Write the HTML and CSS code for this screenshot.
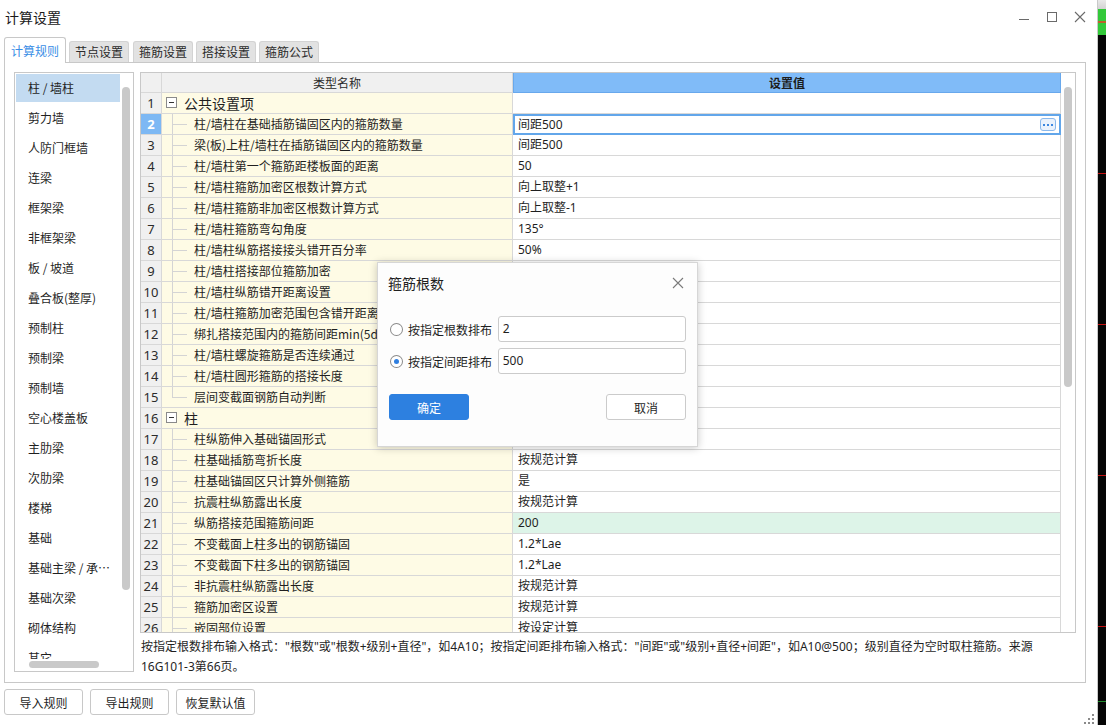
FILE: index.html
```html
<!DOCTYPE html>
<html lang="zh-CN">
<head>
<meta charset="utf-8">
<title>计算设置</title>
<link rel="stylesheet" href="styles.css">
</head>
<body>
<div class="screen">
  <div class="window">
    <div class="titlebar">
      <span class="title">计算设置</span>
      <div class="controls">
        <span class="ctl"><svg width="12" height="12" viewBox="0 0 12 12"><line x1="1" y1="8.5" x2="11" y2="8.5" stroke="#6a6a6a" stroke-width="1"/></svg></span>
        <span class="ctl"><svg width="12" height="12" viewBox="0 0 12 12"><rect x="1.5" y="1.5" width="9" height="9" fill="none" stroke="#6a6a6a" stroke-width="1"/></svg></span>
        <span class="ctl"><svg width="12" height="12" viewBox="0 0 12 12"><path d="M1 1 L11 11 M11 1 L1 11" stroke="#6a6a6a" stroke-width="1.1"/></svg></span>
      </div>
    </div>
    <div class="tabs">
      <span class="tab active">计算规则</span>
      <span class="tab">节点设置</span>
      <span class="tab t2">箍筋设置</span>
      <span class="tab">搭接设置</span>
      <span class="tab">箍筋公式</span>
    </div>
    <div class="panel">
      <div class="list">
        <div class="list-main">
          <ul class="items">
            <li class="sel">柱 / 墙柱</li>
            <li>剪力墙</li>
            <li>人防门框墙</li>
            <li>连梁</li>
            <li>框架梁</li>
            <li>非框架梁</li>
            <li>板 / 坡道</li>
            <li>叠合板(整厚)</li>
            <li>预制柱</li>
            <li>预制梁</li>
            <li>预制墙</li>
            <li>空心楼盖板</li>
            <li>主肋梁</li>
            <li>次肋梁</li>
            <li>楼梯</li>
            <li>基础</li>
            <li>基础主梁 / 承台梁</li>
            <li>基础次梁</li>
            <li>砌体结构</li>
            <li>其它</li>
          </ul>
          <div class="vtrack"><div class="vthumb"></div></div>
        </div>
        <div class="htrack"><div class="hthumb"></div></div>
      </div>
      <div class="main">
        <div class="table">
          <div class="grid">
            <div class="row head"><span class="num"></span><span class="hname">类型名称</span><span class="hval">设置值</span></div>
            <div class="row"><span class="num">1</span><span class="name group"><i class="fold"></i>公共设置项</span><span class="val"></span></div>
            <div class="row"><span class="num cur">2</span><span class="name child">柱/墙柱在基础插筋锚固区内的箍筋数量</span><span class="val editing">间距500<span class="more"><b></b><b></b><b></b></span></span></div>
            <div class="row"><span class="num">3</span><span class="name child">梁(板)上柱/墙柱在插筋锚固区内的箍筋数量</span><span class="val">间距500</span></div>
            <div class="row"><span class="num">4</span><span class="name child">柱/墙柱第一个箍筋距楼板面的距离</span><span class="val">50</span></div>
            <div class="row"><span class="num">5</span><span class="name child">柱/墙柱箍筋加密区根数计算方式</span><span class="val">向上取整+1</span></div>
            <div class="row"><span class="num">6</span><span class="name child">柱/墙柱箍筋非加密区根数计算方式</span><span class="val">向上取整-1</span></div>
            <div class="row"><span class="num">7</span><span class="name child">柱/墙柱箍筋弯勾角度</span><span class="val">135°</span></div>
            <div class="row"><span class="num">8</span><span class="name child">柱/墙柱纵筋搭接接头错开百分率</span><span class="val">50%</span></div>
            <div class="row"><span class="num">9</span><span class="name child">柱/墙柱搭接部位箍筋加密</span><span class="val"></span></div>
            <div class="row"><span class="num">10</span><span class="name child">柱/墙柱纵筋错开距离设置</span><span class="val"></span></div>
            <div class="row"><span class="num">11</span><span class="name child">柱/墙柱箍筋加密范围包含错开距离</span><span class="val"></span></div>
            <div class="row"><span class="num">12</span><span class="name child">绑扎搭接范围内的箍筋间距min(5d,100)</span><span class="val"></span></div>
            <div class="row"><span class="num">13</span><span class="name child">柱/墙柱螺旋箍筋是否连续通过</span><span class="val"></span></div>
            <div class="row"><span class="num">14</span><span class="name child">柱/墙柱圆形箍筋的搭接长度</span><span class="val"></span></div>
            <div class="row"><span class="num">15</span><span class="name child last">层间变截面钢筋自动判断</span><span class="val"></span></div>
            <div class="row"><span class="num">16</span><span class="name group"><i class="fold"></i>柱</span><span class="val"></span></div>
            <div class="row"><span class="num">17</span><span class="name child">柱纵筋伸入基础锚固形式</span><span class="val"></span></div>
            <div class="row"><span class="num">18</span><span class="name child">柱基础插筋弯折长度</span><span class="val">按规范计算</span></div>
            <div class="row"><span class="num">19</span><span class="name child">柱基础锚固区只计算外侧箍筋</span><span class="val">是</span></div>
            <div class="row"><span class="num">20</span><span class="name child">抗震柱纵筋露出长度</span><span class="val">按规范计算</span></div>
            <div class="row"><span class="num">21</span><span class="name child">纵筋搭接范围箍筋间距</span><span class="val green">200</span></div>
            <div class="row"><span class="num">22</span><span class="name child">不变截面上柱多出的钢筋锚固</span><span class="val">1.2*Lae</span></div>
            <div class="row"><span class="num">23</span><span class="name child">不变截面下柱多出的钢筋锚固</span><span class="val">1.2*Lae</span></div>
            <div class="row"><span class="num">24</span><span class="name child">非抗震柱纵筋露出长度</span><span class="val">按规范计算</span></div>
            <div class="row"><span class="num">25</span><span class="name child">箍筋加密区设置</span><span class="val">按规范计算</span></div>
            <div class="row"><span class="num">26</span><span class="name child">嵌固部位设置</span><span class="val">按设定计算</span></div>
          </div>
          <div class="tscroll"><div class="tthumb"></div></div>
        </div>
        <p class="desc">按指定根数排布输入格式："根数"或"根数+级别+直径"，如4A10；按指定间距排布输入格式："间距"或"级别+直径+间距"，如A10@500；级别直径为空时取柱箍筋。来源<br>16G101-3第66页。</p>
      </div>
    </div>
    <div class="actions">
      <button class="btn">导入规则</button>
      <button class="btn">导出规则</button>
      <button class="btn">恢复默认值</button>
    </div>

    <div class="dialog">
      <div class="dlg-title">
        <span>箍筋根数</span>
        <svg class="dlg-close" width="12" height="12" viewBox="0 0 12 12"><path d="M1 1 L11 11 M11 1 L1 11" stroke="#7a7a7a" stroke-width="1.1"/></svg>
      </div>
      <div class="dlg-body">
        <div class="opt">
          <span class="radio"></span>
          <span class="opt-label">按指定根数排布</span>
          <span class="input">2</span>
        </div>
        <div class="opt">
          <span class="radio on"></span>
          <span class="opt-label">按指定间距排布</span>
          <span class="input">500</span>
        </div>
      </div>
      <div class="dlg-actions">
        <button class="dbtn primary">确定</button>
        <button class="dbtn">取消</button>
      </div>
    </div>

    <svg class="grip" width="10" height="10" viewBox="0 0 10 10">
      <rect x="8" y="0" width="2" height="2" fill="#8a8a8a"/>
      <rect x="4" y="4" width="2" height="2" fill="#8a8a8a"/>
      <rect x="8" y="4" width="2" height="2" fill="#8a8a8a"/>
      <rect x="0" y="8" width="2" height="2" fill="#8a8a8a"/>
      <rect x="4" y="8" width="2" height="2" fill="#8a8a8a"/>
      <rect x="8" y="8" width="2" height="2" fill="#8a8a8a"/>
    </svg>
  </div>
  <div class="strip">
    <div class="s-top"></div>
    <div class="s-green"></div>
    <div class="s-black">
      <div class="s-gap g1"></div><div class="s-red"></div>
      <div class="s-gap g2"></div><div class="s-red"></div>
      <div class="s-gap g2"></div><div class="s-red"></div>
      <div class="s-gap g3"></div><div class="s-red"></div>
      <div class="s-gap g4"></div><div class="s-grn"></div>
    </div>
  </div>
</div>
</body>
</html>
```

FILE: styles.css
```css
* { box-sizing: border-box; }
html, body { margin: 0; padding: 0; }
body {
  font-family: "Noto Sans", "Noto Sans CJK SC", sans-serif;
  font-size: 12px;
  color: #1f1f1f;
  background: #fff;
}
.screen {
  width: 1106px;
  height: 725px;
  display: flex;
  overflow: hidden;
}
.window {
  width: 1098px;
  height: 725px;
  border-right: 1px solid #c9c9c9;
  background: #fff;
  position: relative;
  display: flex;
  flex-direction: column;
}

/* title bar */
.titlebar {
  height: 37px;
  display: flex;
  align-items: flex-start;
  padding: 7px 3px 0 5px;
}
.title {
  font-family: "Noto Sans CJK SC", sans-serif;
  font-size: 14px;
  line-height: 20px;
  color: #1a1a1a;
}
.controls { margin-left: auto; display: flex; }
.ctl {
  width: 28px;
  height: 20px;
  display: flex;
  align-items: center;
  justify-content: center;
}

/* tabs */
.tabs {
  height: 25px;
  display: flex;
  align-items: flex-end;
  padding-left: 4px;
  position: relative;
  z-index: 1;
}
.tab {
  height: 21px;
  padding: 0 5px;
  margin-left: 3px;
  background: #e2e2e2;
  border: 1px solid #d3d3d3;
  border-bottom: none;
  border-radius: 3px 3px 0 0;
  font-family: "Noto Sans CJK SC", sans-serif;
  font-size: 12px;
  line-height: 20px;
  color: #2a2a2a;
  width: 60px;
  text-align: center;
}
.tab.t2 { margin-left: 4px; }
.tab.active {
  margin-left: 0;
  width: 62px;
  height: 26px;
  margin-bottom: -1px;
  background: #fff;
  border-color: #c8c8c8;
  color: #3a8ee6;
  line-height: 25px;
}

/* panel */
.panel {
  margin-left: 4px;
  width: 1082px;
  height: 621px;
  border: 1px solid #c8c8c8;
  padding: 9px 9px 0 9px;
  display: flex;
  gap: 6px;
}
.list {
  width: 120px;
  height: 600px;
  border: 1px solid #c8c8c8;
  display: flex;
  flex-direction: column;
  background: #fff;
}
.list-main {
  height: 586px;
  display: flex;
  overflow: hidden;
}
.items {
  list-style: none;
  margin: 0;
  padding: 1px 0 0 1px;
  width: 105px;
}
.items li {
  height: 28px;
  margin-bottom: 2px;
  padding-left: 12px;
  padding-right: 7px;
  font-family: "Noto Sans CJK SC", sans-serif;
  font-size: 12px;
  line-height: 28px;
  color: #1f1f1f;
  white-space: nowrap;
  overflow: hidden;
  text-overflow: ellipsis;
}
.items li.sel { background: #c3dbf1; }
.vtrack { width: 13px; padding: 14px 0 0 2px; }
.vthumb {
  width: 8px;
  height: 503px;
  background: #c9c9c9;
  border-radius: 4px;
}
.htrack { height: 12px; padding: 2px 0 0 14px; }
.hthumb {
  width: 70px;
  height: 7px;
  background: #c9c9c9;
  border-radius: 4px;
}

/* main table */
.main { width: 936px; display: flex; flex-direction: column; }
.table {
  width: 936px;
  height: 561px;
  border: 1px solid #c8c8c8;
  display: flex;
  overflow: hidden;
}
.grid { width: 920px; overflow: hidden; }
.row {
  display: grid;
  grid-template-columns: 21px 351px 548px;
  height: 21px;
}
.row > span {
  border-right: 1px solid #d8d8d8;
  border-bottom: 1px solid #d8d8d8;
  height: 21px;
  line-height: 20px;
  white-space: nowrap;
  overflow: hidden;
  font-family: "Noto Sans CJK SC", sans-serif;
  font-size: 12px;
}
.num {
  background: #f0f0f0;
  text-align: center;
  font-family: "Noto Sans", sans-serif !important;
  font-size: 13px !important;
  color: #2b2b2b;
}
.num.cur { background: #7db8f4; color: #fff; font-weight: bold; }
.row.head { height: 20px; }
.row.head > span { height: 20px; line-height: 19px; }
.hname { background: #f0f0f0; text-align: center; color: #2b2b2b; }
.hval {
  background: #80bbf8;
  border: 1px solid #68a8ec !important;
  border-top: none !important;
  text-align: center;
  font-weight: bold;
  color: #1d1d1d;
}
.name {
  background: #fefbe5;
  position: relative;
  color: #1f1f1f;
}
.name.child { padding-left: 32px; }
.name.child::before {
  content: "";
  position: absolute;
  left: 10px;
  top: 0;
  width: 1px;
  height: 21px;
  background: #d4d4d4;
}
.name.child.last::before { height: 10px; }
.name.child::after {
  content: "";
  position: absolute;
  left: 10px;
  top: 10px;
  width: 15px;
  height: 1px;
  background: #d4d4d4;
}
.name.group {
  padding-left: 22px;
  font-size: 14px !important;
}
.fold {
  position: absolute;
  left: 4px;
  top: 4px;
  width: 11px;
  height: 11px;
  border: 1px solid #8a8a8a;
  background: #fff;
}
.fold::after {
  content: "";
  position: absolute;
  left: 2px;
  top: 4px;
  width: 5px;
  height: 1px;
  background: #333;
}
.val {
  background: #fff;
  padding-left: 5px;
  font-family: "Noto Sans", "Noto Sans CJK SC", sans-serif !important;
  color: #1f1f1f;
}
.val.green { background: #ddf4e8; }
.val.editing {
  border: 2px solid #62a6ea !important;
  padding-left: 3px;
  line-height: 17px !important;
  display: flex;
  align-items: center;
}
.more {
  margin-left: auto;
  margin-right: 3px;
  width: 16px;
  height: 13px;
  border: 1px solid #8bb9ec;
  border-radius: 3px;
  background: #eaf2fc;
  display: flex;
  align-items: center;
  justify-content: center;
  gap: 2px;
}
.more b {
  width: 2px;
  height: 2px;
  background: #3b87e0;
}
.tscroll { width: 14px; padding: 14px 0 0 3px; background: #fff; }
.tthumb {
  width: 8px;
  height: 300px;
  background: #c9c9c9;
  border-radius: 4px;
}
.desc {
  margin: 4px 0 0 1px;
  font-family: "Noto Sans", "Noto Sans CJK SC", sans-serif;
  font-size: 12px;
  line-height: 20px;
  color: #1f1f1f;
  white-space: nowrap;
}

/* bottom actions */
.actions {
  display: flex;
  gap: 7px;
  padding: 6px 0 0 4px;
}
.btn {
  width: 79px;
  height: 26px;
  background: #fff;
  border: 1px solid #c8c8c8;
  border-radius: 3px;
  font-family: "Noto Sans CJK SC", sans-serif;
  font-size: 12px;
  color: #1f1f1f;
  padding: 0;
}

/* dialog (overlay) */
.dialog {
  position: absolute;
  left: 377px;
  top: 262px;
  width: 321px;
  height: 185px;
  background: #fdfdfd;
  border: 1px solid #d6d6d6;
  box-shadow: 0 1px 8px rgba(0, 0, 0, 0.22);
  padding: 0 11px 0 10px;
  display: flex;
  flex-direction: column;
}
.dlg-title {
  height: 39px;
  display: flex;
  align-items: center;
  justify-content: space-between;
  font-family: "Noto Sans CJK SC", sans-serif;
  font-size: 14px;
  color: #1f1f1f;
}
.dlg-close { margin-right: 2px; }
.dlg-body {
  margin-top: 14px;
  display: flex;
  flex-direction: column;
  gap: 6px;
}
.opt { display: flex; align-items: center; height: 26px; }
.radio {
  width: 13px;
  height: 13px;
  border: 1px solid #8a8a8a;
  border-radius: 50%;
  margin-left: 2px;
  background: #fff;
  display: flex;
  align-items: center;
  justify-content: center;
}
.radio.on::after {
  content: "";
  width: 5px;
  height: 5px;
  border-radius: 50%;
  background: #2f7fe0;
}
.opt-label {
  margin-left: 5px;
  width: 90px;
  font-family: "Noto Sans CJK SC", sans-serif;
  font-size: 12px;
  color: #1f1f1f;
}
.input {
  width: 189px;
  height: 26px;
  border: 1px solid #cbcbcb;
  border-radius: 3px;
  background: #fff;
  padding-left: 4px;
  font-family: "Noto Sans", sans-serif;
  font-size: 12px;
  line-height: 24px;
  color: #1f1f1f;
}
.dlg-actions {
  margin-top: 20px;
  display: flex;
  justify-content: space-between;
  padding-left: 1px;
}
.dbtn {
  width: 80px;
  height: 26px;
  border: 1px solid #cbcbcb;
  border-radius: 3px;
  background: #fff;
  font-family: "Noto Sans CJK SC", sans-serif;
  font-size: 12px;
  color: #1f1f1f;
  padding: 0;
}
.dbtn.primary {
  background: #2d80e0;
  border-color: #2d80e0;
  color: #fff;
}
.grip { position: absolute; right: 3px; bottom: 1px; }

/* right edge strip */
.strip { width: 8px; height: 725px; display: flex; flex-direction: column; }
.s-top { height: 9px; background: linear-gradient(#e9e9e9, #d2d2d2); }
.s-green {
  height: 26px;
  background: linear-gradient(#33c93a 0, #33c93a 12px, #c0602a 12px, #c0602a 14px, #33c93a 14px);
}
.s-black { flex: 1; background: #050505; display: flex; flex-direction: column; }
.s-gap.g1 { height: 138px; }
.s-gap.g2 { height: 150px; }
.s-gap.g3 { height: 150px; }
.s-gap.g4 { height: 74px; }
.s-red { height: 1px; background: #c41010; }
.s-grn { height: 1px; background: #1f8a2a; }
```
